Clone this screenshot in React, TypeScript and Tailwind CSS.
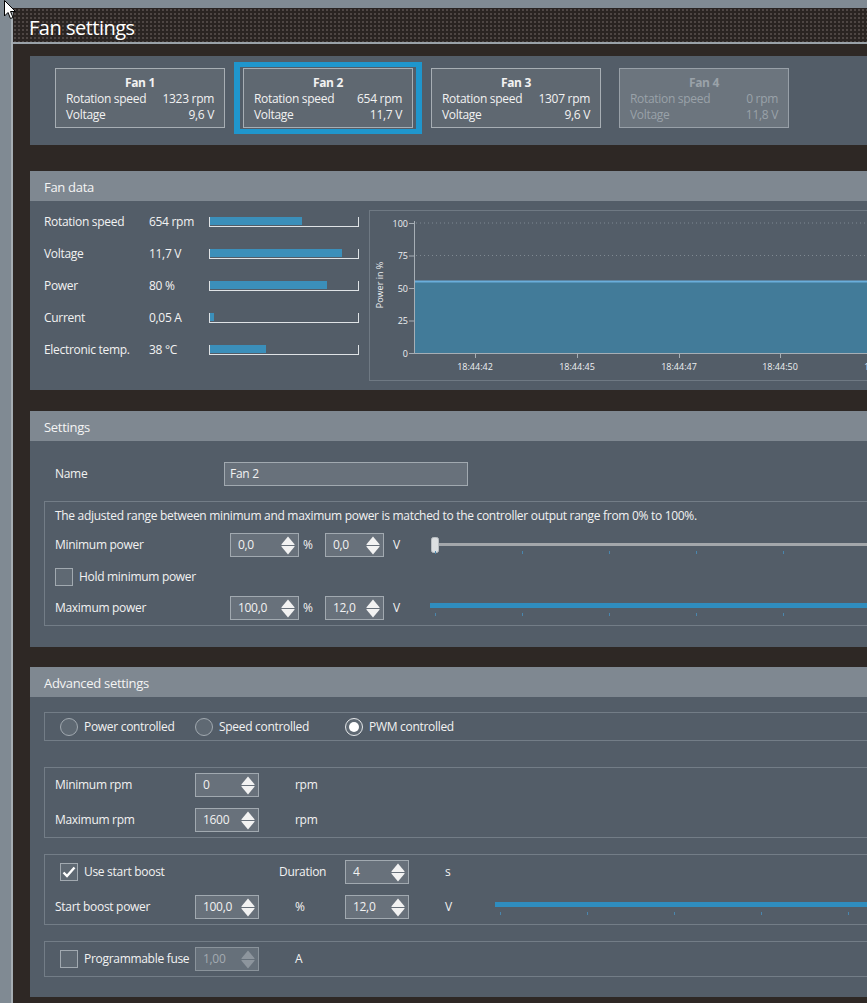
import React from "react";

const fans = [
  { name: "Fan 1", rpm: "1323 rpm", volt: "9,6 V", selected: false, disabled: false },
  { name: "Fan 2", rpm: "654 rpm", volt: "11,7 V", selected: true, disabled: false },
  { name: "Fan 3", rpm: "1307 rpm", volt: "9,6 V", selected: false, disabled: false },
  { name: "Fan 4", rpm: "0 rpm", volt: "11,8 V", selected: false, disabled: true },
];

const fanData = [
  { label: "Rotation speed", value: "654 rpm", pct: 62 },
  { label: "Voltage", value: "11,7 V", pct: 89 },
  { label: "Power", value: "80 %", pct: 79 },
  { label: "Current", value: "0,05 A", pct: 2.5 },
  { label: "Electronic temp.", value: "38 °C", pct: 38 },
];

function Panel({ title, bodyClass, children }: { title: string; bodyClass: string; children: React.ReactNode }) {
  return (
    <div className="w-[1100px]">
      <div className="h-[30px] bg-[#7f8891] pl-[14px] pt-[1px] text-[13px] leading-[30px] text-[#f4f4f4]">{title}</div>
      <div className={"bg-[#535d68] " + bodyClass}>{children}</div>
    </div>
  );
}

function Arrows({ disabled }: { disabled?: boolean }) {
  return (
    <svg width="14" height="19" viewBox="0 0 14 19" className="shrink-0">
      <g fill={disabled ? "#8d959d" : "#f2f2f2"}>
        <path d="M7 0.5 L13.5 8.3 Q14 9 13 9 L1 9 Q0 9 0.5 8.3 Z" />
        <path d="M0.5 10.7 Q0 10 1 10 L13 10 Q14 10 13.5 10.7 L7 18.5 Z" />
      </g>
    </svg>
  );
}

function Spinner({ value, w, disabled }: { value: string; w: string; disabled?: boolean }) {
  return (
    <div
      className={
        "flex h-[24px] shrink-0 items-center justify-between border pl-[7px] pr-[3px] " +
        w +
        (disabled ? " border-[#8a939b] bg-[#66707a] text-[#a3aab1]" : " border-[#a1a9b0] bg-[#68717b]")
      }
    >
      <span>{value}</span>
      <Arrows disabled={disabled} />
    </div>
  );
}

function Checkbox({ checked }: { checked?: boolean }) {
  return (
    <div className="flex h-[18px] w-[18px] shrink-0 items-center justify-center border border-[#a1a9b0] bg-[#5f6973]">
      {checked && (
        <svg width="14" height="12" viewBox="0 0 14 12">
          <path d="M1.5 6.5 L5 10 L12.5 1.5" fill="none" stroke="#ffffff" strokeWidth="2.4" />
        </svg>
      )}
    </div>
  );
}

function Radio({ checked }: { checked?: boolean }) {
  return (
    <div
      className={
        "flex h-[18px] w-[18px] shrink-0 items-center justify-center rounded-full border " +
        (checked ? "border-[#e6e8ea] bg-[#5f6973]" : "border-[#a1a9b0] bg-[#5f6973]")
      }
    >
      {checked && <div className="h-[10px] w-[10px] rounded-full bg-white" />}
    </div>
  );
}

// slider track drawing: gray with thumb (min) or full blue (max)
function Slider({ full }: { full?: boolean }) {
  const ticks = [5, 92, 179, 266, 353, 440, 527];
  return (
    <svg width="600" height="24" className="shrink-0">
      {full ? (
        <rect x="0" y="7" width="600" height="5" fill="#2f8dbf" />
      ) : (
        <>
          <rect x="8" y="10" width="600" height="3" fill="#a3a7ab" />
          <rect x="1.5" y="4.5" width="7" height="15" rx="2" fill="#dcdfe1" stroke="#b9bec2" />
        </>
      )}
      {ticks.map((t) => (
        <rect key={t} x={t} y={full ? 17 : 18} width="1" height="3" fill="#4a86ad" />
      ))}
    </svg>
  );
}

function Chart() {
  const yv = (v: number) => 142 - 1.3 * v;
  const xs = [
    { x: 105, t: "18:44:42" },
    { x: 207, t: "18:44:45" },
    { x: 309, t: "18:44:47" },
    { x: 410, t: "18:44:50" },
    { x: 512, t: "18:44:52" },
  ];
  return (
    <svg
      width="600"
      height="169"
      className="block tracking-normal"
      fontFamily="'Open Sans', 'Noto Sans', sans-serif"
    >
      {[100, 75].map((v) => (
        <line key={v} x1="46" x2="600" y1={yv(v)} y2={yv(v)} stroke="#7f8992" strokeDasharray="1 3" />
      ))}
      <rect x="44" y={yv(55)} width="560" height={yv(0) - yv(55)} fill="#427b99" />
      <rect x="44" y={yv(55) - 1} width="560" height="2" fill="#6aaedb" />
      <line x1="44.5" x2="44.5" y1="10" y2="142.5" stroke="#a6aeb5" />
      <line x1="44" x2="600" y1="142.5" y2="142.5" stroke="#a6aeb5" />
      {[100, 75, 50, 25, 0].map((v) => (
        <g key={v}>
          <line x1="39" x2="44" y1={yv(v) + 0.5} y2={yv(v) + 0.5} stroke="#a6aeb5" />
          <text x="38" y={yv(v) + 3.5} fontSize="9" fill="#eef0f2" textAnchor="end">
            {v}
          </text>
        </g>
      ))}
      {xs.map((p) => (
        <g key={p.x}>
          <line x1={p.x + 0.5} x2={p.x + 0.5} y1="142" y2="147" stroke="#a6aeb5" />
          <text x={p.x} y="159" fontSize="9" fill="#eef0f2" textAnchor="middle">
            {p.t}
          </text>
        </g>
      ))}
      <text x="13" y="74" fontSize="9" fill="#eef0f2" textAnchor="middle" transform="rotate(-90 13 74)">
        Power in %
      </text>
    </svg>
  );
}

export default function App() {
  return (
    <div
      className="relative h-[1003px] w-[867px] overflow-hidden bg-[#808a93] pl-[11px] pt-[8px] text-[12px] tracking-[-0.3px] text-[#f2f2f2]"
      style={{ fontFamily: "'Open Sans', 'Noto Sans', sans-serif" }}
    >
      <div className="h-[1100px] w-[1200px] border-l-2 border-[#a6aeb4] bg-[#2e2825]">
        {/* title bar */}
        <div className="h-[36px] border-b-2 border-[#9aa2a9] bg-[#2a2422] bg-[radial-gradient(circle,#4e4644_1px,transparent_1.3px)] bg-[length:4px_4px] pl-[16px] pt-[4px] text-[20px] leading-[32px] tracking-[-0.5px] text-white">
          Fan settings
        </div>

        <div className="pl-[17px] pt-[12px]">
          {/* fan cards */}
          <div className="flex h-[89px] w-[1100px] bg-[#535d68] pl-[16px] pt-[6px]">
            {fans.map((f) => (
              <div
                key={f.name}
                className={
                  "h-[72px] w-[188px] " +
                  (f.selected ? "border-x-[6px] border-y-[5px] border-[#1f96cd] px-[3px] py-[1px]" : "px-[9px] py-[6px]")
                }
              >
                <div
                  className={
                    "h-[60px] border px-[10px] pt-[6px] leading-[16px] " +
                    (f.disabled ? "border-[#98a0a8] bg-[#6c757e] text-[#9aa2a9]" : "border-[#a7aeb4] bg-[#5f6871]")
                  }
                >
                  <div className="text-center font-bold">{f.name}</div>
                  <div className="flex justify-between">
                    <span>Rotation speed</span>
                    <span>{f.rpm}</span>
                  </div>
                  <div className="flex justify-between">
                    <span>Voltage</span>
                    <span>{f.volt}</span>
                  </div>
                </div>
              </div>
            ))}
          </div>

          {/* fan data */}
          <div className="mt-[26px]">
            <Panel title="Fan data" bodyClass="flex h-[189px]">
              <div className="pl-[14px] pt-[5px]">
                {fanData.map((d) => (
                  <div key={d.label} className="flex h-[32px] items-center">
                    <span className="w-[105px]">{d.label}</span>
                    <span className="w-[60px]">{d.value}</span>
                    <div className="h-[10px] w-[150px] border-x border-b border-[#dfe3e6]">
                      <div className="h-[8px] bg-[#3b8fba]" style={{ width: d.pct + "%" }} />
                    </div>
                  </div>
                ))}
              </div>
              <div className="ml-[10px] mt-[9px] h-[171px] flex-1 border border-[#6f7983]">
                <Chart />
              </div>
            </Panel>
          </div>

          {/* settings */}
          <div className="mt-[21px]">
            <Panel title="Settings" bodyClass="h-[206px] pt-[20px]">
              <div className="flex h-[24px] items-center pl-[25px] pt-[1px]">
                <span className="w-[169px]">Name</span>
                <div className="flex h-[24px] w-[244px] items-center border border-[#a1a9b0] bg-[#68717b] pl-[5px]">Fan 2</div>
              </div>
              <div className="ml-[14px] mt-[16px] border border-[#737d87] pb-[5px] pl-[10px] pt-[5px]">
                <div className="leading-[18px]">
                  The adjusted range between minimum and maximum power is matched to the controller output range from 0% to 100%.
                </div>
                <div className="mt-[8px] flex h-[24px] items-center">
                  <span className="w-[175px]">Minimum power</span>
                  <Spinner value="0,0" w="w-[69px]" />
                  <span className="ml-[4px] w-[22px]">%</span>
                  <Spinner value="0,0" w="w-[59px]" />
                  <span className="ml-[9px] w-[37px]">V</span>
                  <Slider />
                </div>
                <div className="mt-[11px] flex h-[18px] items-center">
                  <Checkbox />
                  <span className="ml-[6px]">Hold minimum power</span>
                </div>
                <div className="mt-[10px] flex h-[24px] items-center">
                  <span className="w-[175px]">Maximum power</span>
                  <Spinner value="100,0" w="w-[69px]" />
                  <span className="ml-[4px] w-[22px]">%</span>
                  <Spinner value="12,0" w="w-[59px]" />
                  <span className="ml-[9px] w-[37px]">V</span>
                  <Slider full />
                </div>
              </div>
            </Panel>
          </div>

          {/* advanced settings */}
          <div className="mt-[20px]">
            <Panel title="Advanced settings" bodyClass="h-[300px] pt-[15px]">
              <div className="ml-[14px] flex h-[29px] items-center border border-[#737d87] pl-[15px]">
                <div className="flex w-[135px] items-center">
                  <Radio />
                  <span className="ml-[6px]">Power controlled</span>
                </div>
                <div className="flex w-[150px] items-center">
                  <Radio />
                  <span className="ml-[6px]">Speed controlled</span>
                </div>
                <div className="flex items-center">
                  <Radio checked />
                  <span className="ml-[6px]">PWM controlled</span>
                </div>
              </div>

              <div className="ml-[14px] mt-[26px] border border-[#737d87] pb-[5px] pl-[10px] pt-[5px]">
                <div className="flex h-[24px] items-center">
                  <span className="w-[140px]">Minimum rpm</span>
                  <Spinner value="0" w="w-[64px]" />
                  <span className="ml-[36px]">rpm</span>
                </div>
                <div className="mt-[11px] flex h-[24px] items-center">
                  <span className="w-[140px]">Maximum rpm</span>
                  <Spinner value="1600" w="w-[64px]" />
                  <span className="ml-[36px]">rpm</span>
                </div>
              </div>

              <div className="ml-[14px] mt-[16px] border border-[#737d87] pb-[5px] pl-[10px] pt-[5px]">
                <div className="flex h-[24px] items-center">
                  <div className="flex w-[224px] items-center pl-[5px]">
                    <Checkbox checked />
                    <span className="ml-[6px]">Use start boost</span>
                  </div>
                  <span className="w-[66px]">Duration</span>
                  <Spinner value="4" w="w-[64px]" />
                  <span className="ml-[36px]">s</span>
                </div>
                <div className="mt-[11px] flex h-[24px] items-center">
                  <span className="w-[140px]">Start boost power</span>
                  <Spinner value="100,0" w="w-[64px]" />
                  <span className="ml-[36px] w-[50px]">%</span>
                  <Spinner value="12,0" w="w-[64px]" />
                  <span className="ml-[36px] w-[50px]">V</span>
                  <Slider full />
                </div>
              </div>

              <div className="ml-[14px] mt-[16px] border border-[#737d87] py-[5px] pl-[15px]">
                <div className="flex h-[24px] items-center">
                  <div className="flex w-[135px] items-center">
                    <Checkbox />
                    <span className="ml-[6px]">Programmable fuse</span>
                  </div>
                  <Spinner value="1,00" w="w-[64px]" disabled />
                  <span className="ml-[36px]">A</span>
                </div>
              </div>
            </Panel>
          </div>
        </div>
      </div>

      {/* mouse pointer */}
      <svg className="absolute left-[4px] top-0" width="13" height="20" viewBox="0 0 13 20">
        <path d="M0.5 0.5 L0.5 16 L4 12.5 L6.5 18.5 L9 17.5 L6.5 11.5 L11.5 11.5 Z" fill="#ffffff" stroke="#000000" strokeWidth="1" />
      </svg>
    </div>
  );
}
